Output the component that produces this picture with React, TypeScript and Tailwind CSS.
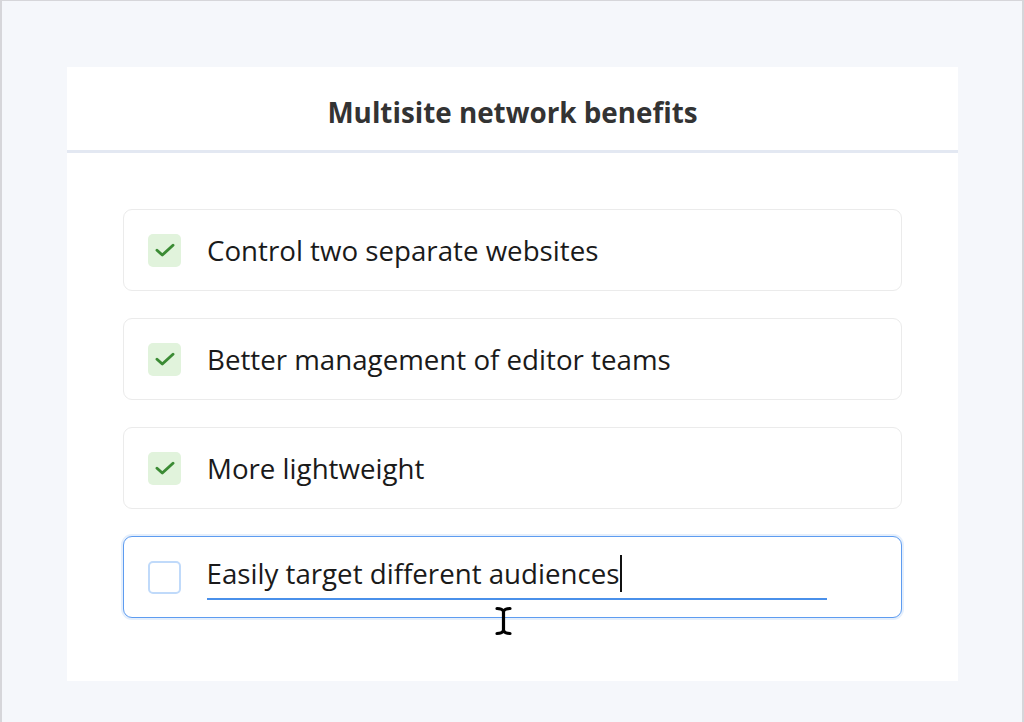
import React from "react";

const font = { fontFamily: '"Open Sans", "Noto Sans", Arial, sans-serif' };

function Check() {
  return (
    <div className="w-[33px] h-[33px] rounded-[5px] bg-[#e1f3dc] flex items-center justify-center shrink-0">
      <svg width="20" height="14" viewBox="0 0 20 14" fill="none">
        <path d="M2 7.2 L7.3 12 L18 2.2" stroke="#3b8b34" strokeWidth="2.9" strokeLinecap="round" strokeLinejoin="round" />
      </svg>
    </div>
  );
}

function Item({ text }: { text: string }) {
  return (
    <div className="h-[82px] rounded-[9px] border border-[#ebebeb] bg-white flex items-center pl-[24px]">
      <Check />
      <span className="ml-[26px] text-[27.7px] leading-[38px] text-[#1a1a1a]">{text}</span>
    </div>
  );
}

export default function App() {
  return (
    <div
      className="w-[1024px] h-[722px] bg-[#f5f7fb] border-l-2 border-r-2 border-t border-[#d6d6da] pt-[66px] pl-[65px]"
      style={font}
    >
      <div className="w-[891px] h-[614px] bg-white flex flex-col">
        <div className="h-[86px] pt-[26px] text-center text-[27.8px] leading-[38px] font-bold text-[#333333] border-b-[3px] border-[#e3e8f2]">
          Multisite network benefits
        </div>
        <div className="px-[56px] pt-[56px] flex flex-col gap-[27px]">
          <Item text="Control two separate websites" />
          <Item text="Better management of editor teams" />
          <Item text="More lightweight" />
          <div className="relative h-[82px] rounded-[9px] border-[1.5px] border-[#5e9cf0] shadow-[0_0_0_2px_rgba(110,165,239,0.18)] bg-white flex items-center pl-[23.5px]">
            <div className="w-[33px] h-[33px] rounded-[5px] border-2 border-[#c0dafa] bg-white shrink-0" />
            <div className="ml-[26px] w-[620px] flex flex-col">
              <span className="relative self-start text-[27.7px] leading-[38px] text-[#1a1a1a]">
                Easily target different audiences
                <span className="absolute right-[-2px] top-[1px] w-[1.5px] h-[37px] bg-[#111]" />
              </span>
              <div className="mt-[6px] h-[1.5px] bg-[#4a90ea]" />
            </div>
            <svg className="absolute left-[371px] top-[69px]" width="17" height="30" viewBox="0 0 17 30" fill="none">
              <path d="M2 2.5 C5.5 2.5 7.5 3 8.5 5.5 C9.5 3 11.5 2.5 15 2.5 M8.5 5.5 L8.5 24.5 M2 27.5 C5.5 27.5 7.5 27 8.5 24.5 C9.5 27 11.5 27.5 15 27.5" stroke="#000" strokeWidth="3.2" strokeLinecap="round" />
            </svg>
          </div>
        </div>
      </div>
    </div>
  );
}
